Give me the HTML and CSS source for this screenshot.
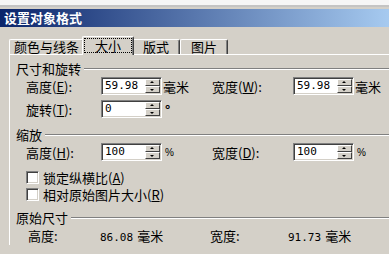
FILE: index.html
```html
<!DOCTYPE html>
<html lang="zh-CN">
<head>
    <meta charset="UTF-8">
    <title>设置对象格式</title>
    <link rel="stylesheet" href="styles.css">
</head>
<body>
    <div class="top-strip"></div>
    <div class="titlebar">设置对象格式</div>

    <div class="tabs">
        <div class="tab">颜色与线条</div>
        <div class="tab active"><span class="focus">大小</span></div>
        <div class="tab">版式</div>
        <div class="tab">图片</div>
    </div>

    <div class="panel">
        <div class="group-title">尺寸和旋转</div>
        <div class="fields">
            <label>高度(<u>E</u>):</label>
            <div class="spin"><span class="val">59.98</span><span class="arrows"><i class="up"></i><i class="down"></i></span></div>
            <span class="unit">毫米</span>
            <label>宽度(<u>W</u>):</label>
            <div class="spin"><span class="val">59.98</span><span class="arrows"><i class="up"></i><i class="down"></i></span></div>
            <span class="unit">毫米</span>

            <label>旋转(<u>T</u>):</label>
            <div class="spin"><span class="val">0</span><span class="arrows"><i class="up"></i><i class="down"></i></span></div>
            <span class="unit deg">°</span>
        </div>

        <div class="group-title spaced">缩放</div>
        <div class="fields">
            <label>高度(<u>H</u>):</label>
            <div class="spin"><span class="val">100</span><span class="arrows"><i class="up"></i><i class="down"></i></span></div>
            <span class="unit pct">%</span>
            <label>宽度(<u>D</u>):</label>
            <div class="spin"><span class="val">100</span><span class="arrows"><i class="up"></i><i class="down"></i></span></div>
            <span class="unit pct">%</span>
        </div>

        <div class="checks">
            <div class="check"><span class="box"></span>锁定纵横比(<u>A</u>)</div>
            <div class="check"><span class="box"></span>相对原始图片大小(<u>R</u>)</div>
        </div>

        <div class="group-title orig-title">原始尺寸</div>
        <div class="orig">
            <span>高度:</span>
            <span><span class="num">86.08</span><span class="mm">毫米</span></span>
            <span>宽度:</span>
            <span><span class="num">91.73</span><span class="mm">毫米</span></span>
        </div>
    </div>
</body>
</html>
```

FILE: styles.css
```css
body {
    margin: 0;
    width: 389px;
    height: 254px;
    overflow: hidden;
    background: #d4d0c8;
    font-family: "Noto Sans CJK SC", sans-serif;
    font-size: 13px;
    line-height: 15px;
    color: #000;
}
.top-strip {
    height: 5px;
    background: #f6f6f6;
    border-bottom: 2px solid #c4c4c4;
    margin-bottom: 2px;
}
.titlebar {
    height: 18px;
    line-height: 18px;
    padding-left: 4px;
    color: #fff;
    font-weight: bold;
    background: linear-gradient(to right, #0a246a, #a6caf0);
}

/* tabs */
.tabs {
    display: flex;
    align-items: flex-end;
    height: 18px;
    margin: 9px 0 0 9px;
}
.tab {
    box-sizing: border-box;
    height: 15px;
    min-width: 48px;
    padding: 0 4px;
    line-height: 14px;
    text-align: center;
    border-top: 1px solid #fff;
    border-left: 1px solid #fff;
    border-right: 1px solid #404040;
    box-shadow: inset -1px 0 #808080;
    border-radius: 2px 2px 0 0;
}
.tab.active {
    position: relative;
    z-index: 1;
    height: 19px;
    min-width: 52px;
    margin: 0 -2px -1px;
    padding: 0;
    background: #d4d0c8;
}
.focus {
    display: block;
    margin: 1px 1px 0;
    border: 1px dotted #000;
    line-height: 13px;
}

/* panel */
.panel {
    width: 420px;
    padding-top: 6px;
    margin-left: 9px;
    border-top: 1px solid #fff;
    border-left: 1px solid #fff;
}
.group-title {
    display: flex;
    align-items: center;
    height: 15px;
    margin-left: 6px;
}
.group-title::after {
    content: "";
    flex: 1;
    margin-left: 3px;
    border-top: 1px solid #808080;
    border-bottom: 1px solid #fff;
}
.group-title.spaced {
    margin-top: 9px;
}
.group-title.orig-title {
    margin-top: 7px;
}
.fields {
    display: grid;
    grid-template-columns: 75px 61px 50px 81px 61px auto;
    grid-auto-rows: 18px;
    row-gap: 5px;
    align-items: center;
    margin: 1px 0 0 16px;
}
.spin {
    box-sizing: border-box;
    display: flex;
    height: 18px;
    background: #fff;
    border: 1px solid;
    border-color: #808080 #fff #fff #808080;
    box-shadow: inset 1px 1px #404040, inset -1px -1px #d4d0c8;
    padding: 1px;
}
.val {
    flex: 1;
    padding-left: 2px;
    font-family: "DejaVu Sans Mono", monospace;
    font-size: 11px;
    line-height: 14px;
}
.arrows {
    display: flex;
    flex-direction: column;
    width: 15px;
}
.arrows i {
    box-sizing: border-box;
    position: relative;
    height: 7px;
    background: #d4d0c8;
    border: 1px solid;
    border-color: #fff #404040 #404040 #fff;
}
.arrows i::after {
    content: "";
    position: absolute;
    left: 4px;
    top: 1px;
    border-left: 2px solid transparent;
    border-right: 2px solid transparent;
}
.arrows .up::after {
    border-bottom: 2px solid #000;
}
.arrows .down::after {
    top: 2px;
    border-top: 2px solid #000;
}
.unit {
    padding-left: 1px;
}
.unit.deg {
    padding-left: 3px;
    font-weight: bold;
}
.unit.pct {
    padding-left: 3px;
    font-family: "Liberation Sans", sans-serif;
    font-size: 10px;
}

/* checkboxes */
.checks {
    margin: 8px 0 0 16px;
}
.check {
    display: flex;
    align-items: center;
    height: 17px;
}
.box {
    box-sizing: border-box;
    width: 13px;
    height: 13px;
    margin-right: 4px;
    background: #fff;
    border: 1px solid;
    border-color: #808080 #fff #fff #808080;
    box-shadow: inset 1px 1px #404040, inset -1px -1px #d4d0c8;
}

/* original size */
.orig {
    display: grid;
    grid-template-columns: 72px 110px 78px auto;
    margin: 3px 0 0 18px;
}
.num {
    font-family: "DejaVu Sans Mono", monospace;
    font-size: 11px;
}
.mm {
    margin-left: 4px;
}
```
